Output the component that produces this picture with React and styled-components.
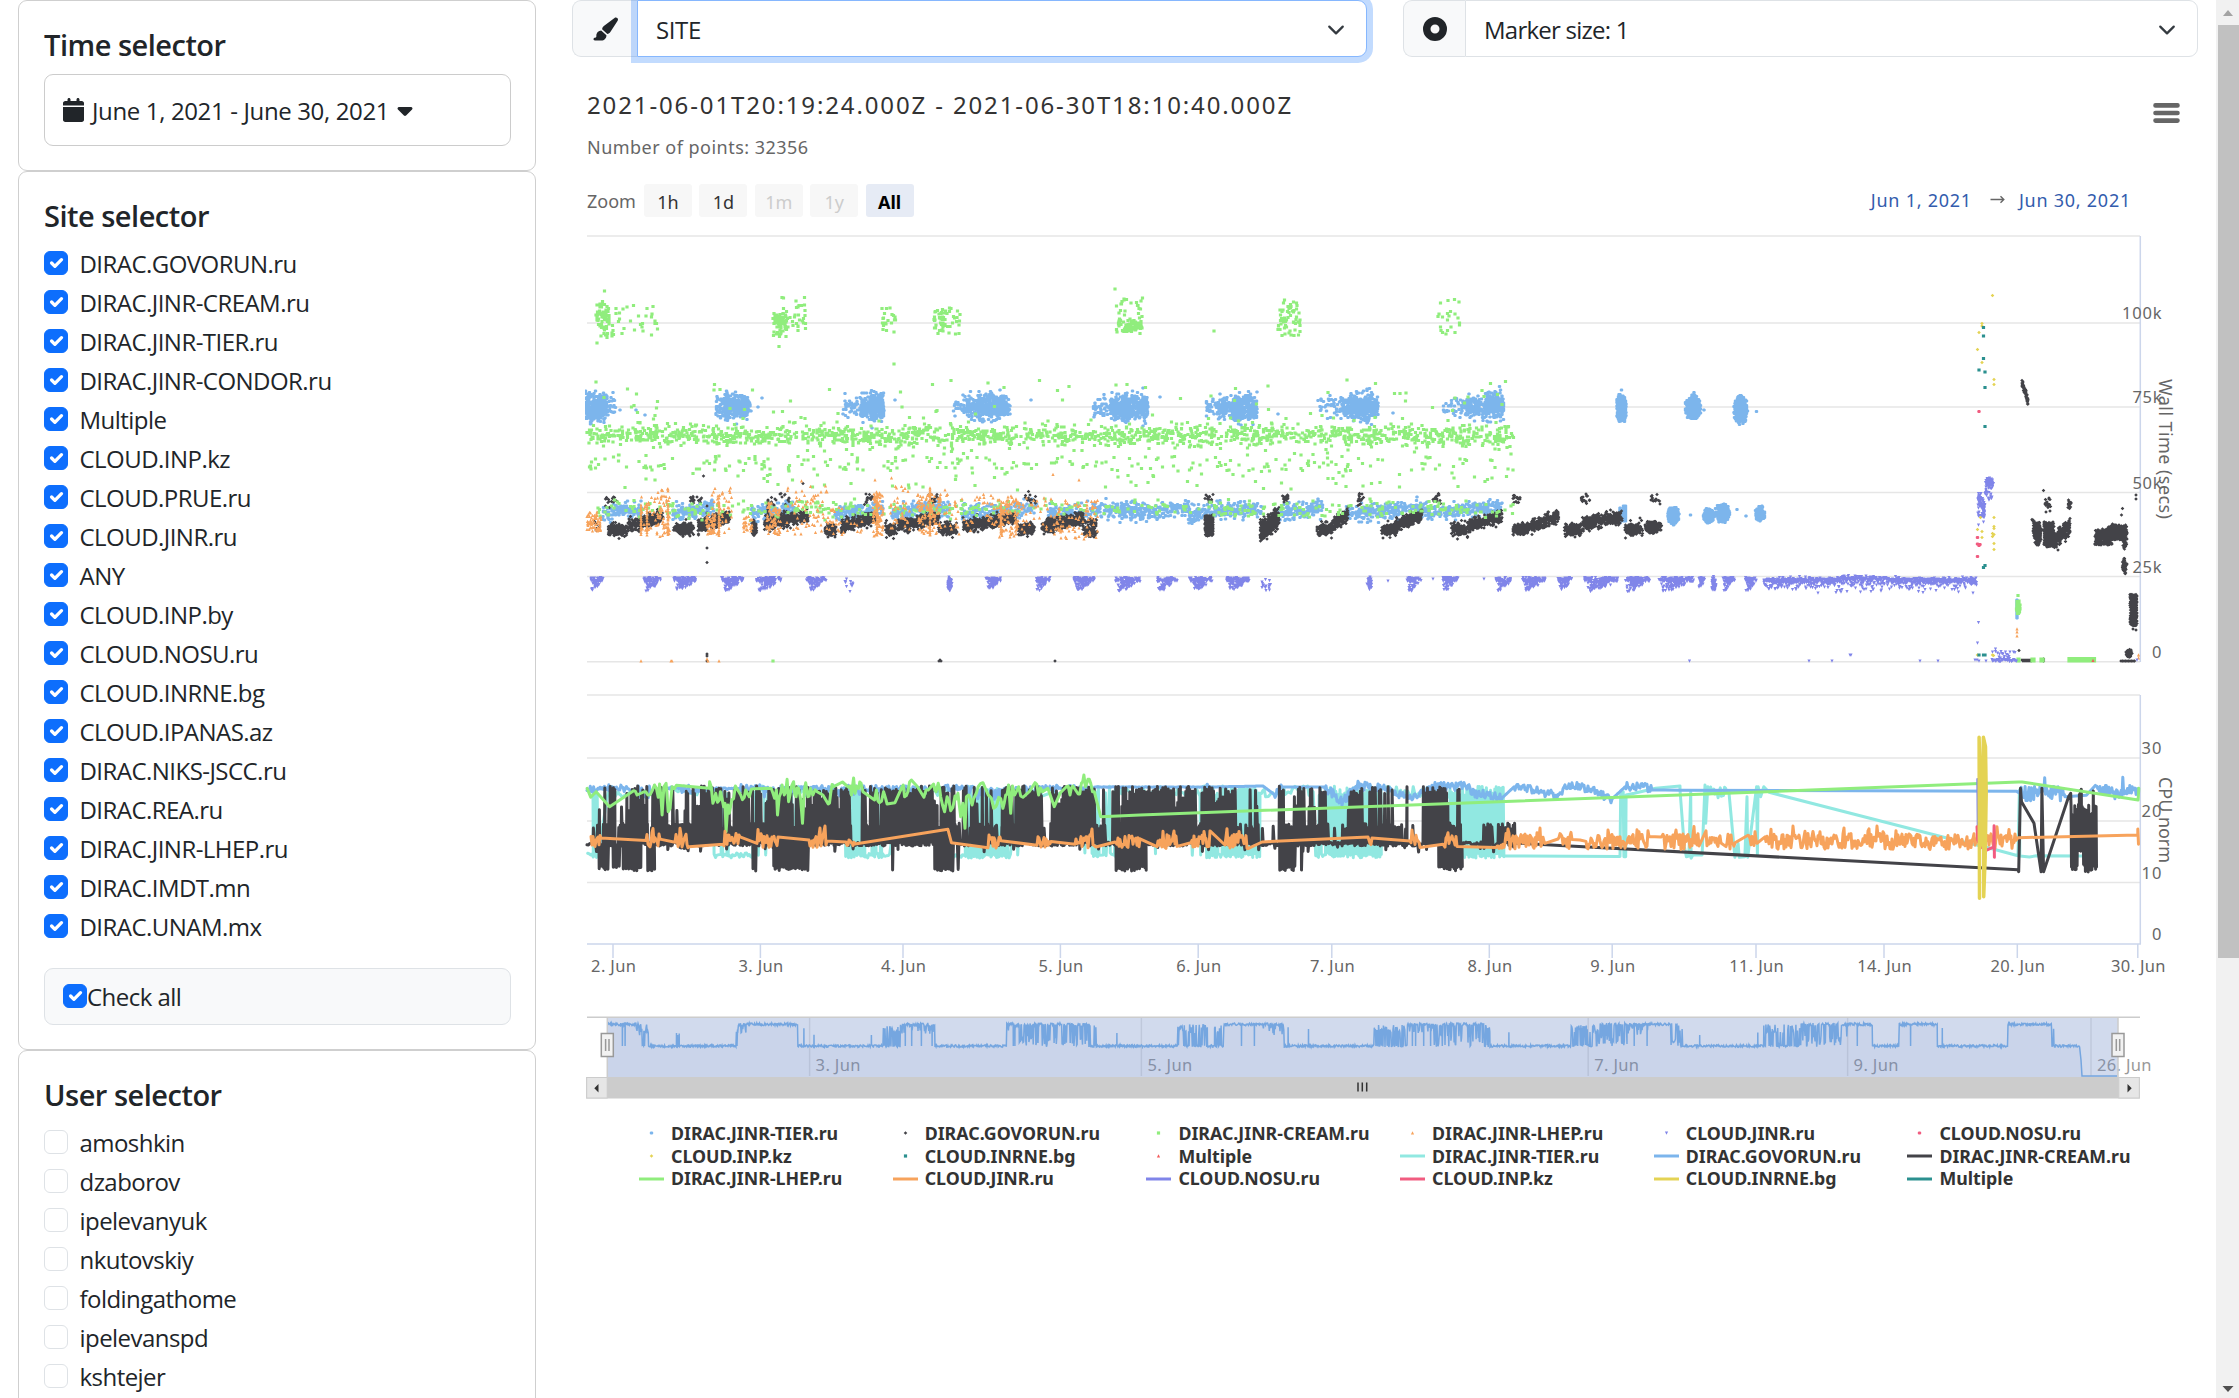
import React from "react";
import styled, { createGlobalStyle, css } from "styled-components";
import { FaCalendar, FaCaretDown, FaPaintbrush, FaCircleDot } from "react-icons/fa6";

const ui = '"Open Sans", "Noto Sans", sans-serif';
const chartFont = '"Noto Sans", "Open Sans", sans-serif';

const GlobalStyle = createGlobalStyle`
  * { box-sizing: border-box; }
  body { margin: 0; background: #fff; color: #212529; font-family: ${ui}; font-size: 24px; line-height: 36px; overflow: hidden; }
`;

const Page = styled.div`
  display: flex;
  height: 1398px;
  overflow: hidden;
`;

const Sidebar = styled.aside`
  flex: none;
  width: 536px;
  padding-left: 18px;
`;

const Card = styled.section`
  border: 1px solid #cfcfcf;
  border-radius: 9px;
  padding: 24px 24px 24px 25px;
`;

const CardTitle = styled.h5`
  height: 36px;
  margin: 0 0 13px;
  padding-top: 2px;
  font-size: 29px;
  font-weight: 600;
  line-height: 36px;
  letter-spacing: -0.5px;
`;

const DateButton = styled.div`
  display: flex;
  align-items: center;
  height: 72px;
  padding-left: 18px;
  border: 1px solid #cccccc;
  border-radius: 9px;
  letter-spacing: -0.36px;
  span { padding: 2px 4px 0 5px; white-space: pre; }
`;

const CheckRow = styled.label`
  display: flex;
  height: 39px;
  letter-spacing: -0.54px;
  span { padding: 1px 0 0 ${(p) => (p.$tight ? 0 : "11.5px")}; }
`;

const Box = styled.i`
  flex: none;
  display: flex;
  width: 24px;
  height: 24px;
  margin-top: 6px;
  border-radius: 6px;
  border: 1px solid ${(p) => (p.$on ? "#0d6efd" : "#dee2e6")};
  background: ${(p) => (p.$on ? "#0d6efd" : "#fff")};
`;

const CheckAll = styled.div`
  height: 57px;
  margin-top: 21px;
  padding: 9px 18px;
  border: 1px solid #dee2e6;
  border-radius: 9px;
  background: #f8f9fa;
`;

const Main = styled.main`
  flex: 1;
  padding: 0 18px 0 36px;
`;

const Toolbar = styled.div`
  display: flex;
  gap: 36px;
`;

const Group = styled.div`
  display: flex;
  width: 795px;
  height: 57px;
`;

const Addon = styled.div`
  display: flex;
  align-items: center;
  justify-content: center;
  width: ${(p) => p.$w}px;
  border: 1px solid #dee2e6;
  border-right: 0;
  border-radius: 9px 0 0 9px;
  background: #f8f9fa;
`;

const Select = styled.div`
  display: flex;
  flex: 1;
  align-items: center;
  justify-content: space-between;
  padding: 2px 18px 0;
  background: #fff;
  border: 1px solid #dee2e6;
  border-radius: 0 9px 9px 0;
  letter-spacing: -0.75px;
  ${(p) => p.$focus && css`
    border-color: #86b7fe;
    box-shadow: 0 0 0 6px rgba(13, 110, 253, 0.25);
    letter-spacing: -0.4px;
  `}
`;

const ChartHead = styled.header`
  display: flex;
  justify-content: space-between;
  padding: 32px 18px 0 15px;
  height: 127px;
  font-family: ${chartFont};
`;

const ChartTitle = styled.div`
  font-size: 24px;
  line-height: 32px;
  color: #333;
  letter-spacing: 1.87px;
`;

const ChartSubtitle = styled.div`
  margin-top: 14px;
  font-size: 18px;
  line-height: 24px;
  color: #666;
  letter-spacing: 0.48px;
`;

const Burger = styled.svg`
  margin-top: 13px;
`;

const RangeBar = styled.div`
  display: flex;
  align-items: center;
  height: 33px;
  padding: 0 67px 0 15px;
  font-family: ${chartFont};
  font-size: 18px;
  color: #666;
`;

const ZoomLabel = styled.span`
  width: 57px;
`;

const RangeButton = styled.button`
  width: 48px;
  height: 33px;
  margin: 0 7.4px 0 0;
  padding: 0;
  border: 0;
  border-radius: 3px;
  font: inherit;
  background: ${(p) => (p.$active ? "#e6ebf5" : "#f7f7f7")};
  color: ${(p) => (p.$active ? "#000" : p.$disabled ? "#ccc" : "#333")};
  font-weight: ${(p) => (p.$active ? 700 : 400)};
`;

const Dates = styled.div`
  display: flex;
  align-items: center;
  height: 31px;
  margin: 0 0 2px auto;
  color: #335cad;
  letter-spacing: 0.75px;
`;

const Arrow = styled.svg`
  margin: 0 14px 0 18px;
`;

const Plot = styled.svg`
  display: block;
  margin-top: 13px;
  font-family: ${chartFont};
  font-size: 16.5px;
`;

const Legend = styled.ul`
  display: grid;
  grid-template-columns: repeat(6, 253.7px);
  grid-auto-rows: 22.7px;
  margin: 14px 0 0 67px;
  padding: 0;
  list-style: none;
  font: 700 17.8px/22.7px ${chartFont};
  color: #333;
  li { display: flex; align-items: center; gap: 7px; white-space: nowrap; }
`;

const ScrollTrack = styled.div`
  display: flex;
  flex-direction: column;
  justify-content: space-between;
  align-items: center;
  width: 23px;
  padding: 8px 0 5px;
  background: #f1f1f1;
`;

const Thumb = styled.div`
  width: 21px;
  height: 933px;
  margin: 8px 0 auto 2px;
  background: #c1c1c1;
`;

const sites = ["DIRAC.GOVORUN.ru", "DIRAC.JINR-CREAM.ru", "DIRAC.JINR-TIER.ru", "DIRAC.JINR-CONDOR.ru", "Multiple", "CLOUD.INP.kz", "CLOUD.PRUE.ru", "CLOUD.JINR.ru", "ANY", "CLOUD.INP.by", "CLOUD.NOSU.ru", "CLOUD.INRNE.bg", "CLOUD.IPANAS.az", "DIRAC.NIKS-JSCC.ru", "DIRAC.REA.ru", "DIRAC.JINR-LHEP.ru", "DIRAC.IMDT.mn", "DIRAC.UNAM.mx"];
const users = ["amoshkin", "dzaborov", "ipelevanyuk", "nkutovskiy", "foldingathome", "ipelevanspd", "kshtejer"];

const C = { blue: "#7cb5ec", black: "#434348", green: "#90ed7d", orange: "#f7a35c", purple: "#8085e9", pink: "#f15c80", yellow: "#e4d354", teal: "#2b908f", red: "#f45b5b", cyan: "#91e8e1" };

const legend = [
  ["DIRAC.JINR-TIER.ru", C.blue, "circle"], ["DIRAC.GOVORUN.ru", C.black, "diamond"], ["DIRAC.JINR-CREAM.ru", C.green, "square"], ["DIRAC.JINR-LHEP.ru", C.orange, "up"], ["CLOUD.JINR.ru", C.purple, "down"], ["CLOUD.NOSU.ru", C.pink, "circle"],
  ["CLOUD.INP.kz", C.yellow, "diamond"], ["CLOUD.INRNE.bg", C.teal, "square"], ["Multiple", C.red, "up"], ["DIRAC.JINR-TIER.ru", C.cyan], ["DIRAC.GOVORUN.ru", C.blue], ["DIRAC.JINR-CREAM.ru", C.black],
  ["DIRAC.JINR-LHEP.ru", C.green], ["CLOUD.JINR.ru", C.orange], ["CLOUD.NOSU.ru", C.purple], ["CLOUD.INP.kz", C.pink], ["CLOUD.INRNE.bg", C.yellow], ["Multiple", C.teal],
];

/* ---------- seeded data ---------- */
let seed = 20210601;
const rnd = () => {
  seed = (seed * 1664525 + 1013904223) >>> 0;
  return seed / 4294967296;
};
const gauss = () => (rnd() + rnd() + rnd() + rnd() - 2) / 2;
const q = (v) => Math.round(v * 2) / 2;

/* uniform in x, bell-shaped in y */
const fill = (out, x0, x1, y0, y1, n) => {
  for (let i = 0; i < n; i++) out.push([x0 + rnd() * (x1 - x0), (y0 + y1) / 2 + gauss() * (y1 - y0) * 0.72]);
};
/* uniform in both directions */
const spread = (out, x0, x1, y0, y1, n) => {
  for (let i = 0; i < n; i++) out.push([x0 + rnd() * (x1 - x0), y0 + rnd() * (y1 - y0)]);
};
/* soft-edged ellipse */
const blob = (out, x0, x1, y0, y1, n) => {
  for (let i = 0; i < n; i++) {
    const a = rnd() * 6.283, r = Math.pow(rnd(), 0.55) * (0.8 + rnd() * 0.28);
    out.push([(x0 + x1) / 2 + (Math.cos(a) * r * (x1 - x0)) / 2, (y0 + y1) / 2 + (Math.sin(a) * r * (y1 - y0)) / 2]);
  }
};
const slope = (out, x0, x1, ya, yb, h, n) => {
  for (let i = 0; i < n; i++) {
    const t = rnd();
    out.push([x0 + t * (x1 - x0), ya + t * (yb - ya) + gauss() * h]);
  }
};

const green = [];
[[596, 609, 300, 338, 62], [773, 788, 308, 338, 62], [934, 945, 303, 336, 36], [1118, 1142, 318, 334, 56], [587, 1514, 424, 447, 1500], [587, 1514, 499, 519, 420]].forEach((a) => fill(green, ...a));
[[609, 658, 304, 337, 32], [780, 806, 297, 331, 36], [882, 897, 306, 332, 20], [943, 961, 308, 334, 20], [1115, 1143, 297, 332, 44], [1278, 1301, 299, 336, 56], [1438, 1460, 296, 336, 22], [587, 1514, 380, 402, 42], [587, 1514, 400, 430, 40], [587, 1514, 418, 452, 110], [587, 1514, 457, 471, 150], [587, 1514, 453, 490, 140]].forEach((a) => spread(green, ...a));
[[604.6, 291], [597, 343], [779, 346.5], [894, 364], [1214, 331], [1115, 289], [773, 661], [2018, 595.7]].forEach((p) => green.push(p));
blob(green, 2016.5, 2020, 600, 614, 70);
for (let x = 2069; x < 2096; x += 1.5) green.push([x, 658.5], [x, 661]);
[2018, 2019, 2032, 2034, 2041, 2043].forEach((x) => green.push([x, 659], [x, 661]));

const blue = [];
[[585, 607, 391, 423, 330], [716, 751, 394, 421, 120], [724, 748, 391, 422, 220], [843, 859, 395, 419, 44], [860, 872, 393, 422, 110], [870, 884, 391, 423, 220], [953, 970, 394, 420, 36], [966, 1010, 394, 421, 210], [978, 1008, 391, 422, 260], [1093, 1112, 395, 420, 46], [1110, 1130, 394, 421, 190], [1122, 1148, 391, 423, 290], [1206, 1225, 398, 417, 40], [1218, 1240, 395, 422, 120], [1234, 1257, 391, 424, 250], [1316, 1345, 396, 418, 44], [1340, 1379, 394, 421, 200], [1350, 1374, 391, 423, 250], [1443, 1475, 397, 419, 56], [1465, 1490, 394, 420, 120], [1486, 1504, 391, 421, 220]].forEach((a) => fill(blue, ...a));
fill(blue, 600, 616, 395, 419, 50);
[[1685, 1701, 395, 421, 280], [1734, 1748, 395, 425, 280], [1667.5, 1679, 506, 525, 210], [1703, 1714, 508, 524, 140], [1715, 1730, 503, 523, 210], [1755, 1765, 505, 522, 130]].forEach((a) => blob(blue, ...a));
spread(blue, 1617, 1626, 399, 418, 240);
spread(blue, 1618.5, 1624.5, 394, 422, 100);
[[603, 642, 110], [673, 714, 150], [750, 795, 130], [835, 884, 150], [892, 950, 190], [962, 1037, 190], [1048, 1140, 210], [1120, 1190, 190], [1188, 1263, 210], [1277, 1323, 150], [1345, 1427, 280], [1427, 1502, 220]].forEach(([a, b, n]) => slope(blue, a, b, 514, 508, 14, n));
for (let y = 506; y < 522; y++) blue.push([1623.5, y], [1625.5, y], [1620, y + 2]);
for (let y = 600; y < 619; y++) blue.push([2017, y]);
[[1621.7, 390], [620, 410], [636, 410], [645, 415], [762, 398], [758, 407], [895, 400], [1031, 400], [1160, 397], [1278, 414], [1393, 413], [1694, 392.5], [1704, 410], [1756.7, 411.5], [1690.5, 515], [1737, 509.5], [1746, 516]].forEach((p) => blue.push(p));

const black = [];
[[608, 628], [673.6, 694], [938, 957], [1017, 1035], [1317, 1332], [1381, 1397], [1451, 1468], [1513, 1530], [1564, 1582.5], [1625, 1642.5], [885, 897], [824, 836]].forEach(([a, b]) => {
  blob(black, a, b, 524, 535, (b - a) * 7);
  fill(black, a, b, 520, 539, (b - a) * 2.5);
});
[[629, 663, 526, 516], [698, 730, 526, 516], [764, 808, 524, 515], [841, 876, 526, 517], [898, 939, 526, 517], [963, 1016, 526, 517], [1042, 1083, 527, 518], [1330, 1348, 527, 514], [1395, 1422, 526, 515], [1468, 1502, 526, 516], [1531, 1558.6, 526, 516], [1582.5, 1622, 524, 517]].forEach(([a, b, c, d]) => slope(black, a, b, c, d, 10.5, (b - a) * 9));
[[751, 757, 520, 536, 60], [1644, 1662, 520, 534, 130], [2034, 2041, 524, 546, 150], [2122, 2127, 530, 550, 40], [2122, 2127, 557, 574, 60], [2126, 2132, 649, 658, 60]].forEach((a) => blob(black, ...a));
[[1082, 1097, 519, 537, 110], [1205, 1213, 515, 536, 270], [2044, 2054, 522, 547, 260], [2033, 2041, 522, 536, 60], [2095, 2112, 530, 545, 200], [2110, 2127, 525, 540, 260], [2130, 2137, 594, 626, 250], [587, 600, 521, 531, 8]].forEach((a) => spread(black, ...a));
slope(black, 1260, 1279, 531, 518, 17, 460);
slope(black, 2022, 2028, 383, 401, 7, 80);
slope(black, 2032, 2042, 520, 530, 2, 40);
slope(black, 2054, 2070, 541, 526, 14, 220);
slope(black, 2095, 2114, 537, 526, 6, 90);
[[605, 618], [690, 703], [771, 790], [864, 873], [928, 938], [1025, 1036], [1205, 1213], [1282, 1288], [1357, 1364], [1433, 1441], [1512, 1520], [1581, 1590], [1651, 1661], [2045, 2051], [2067, 2072]].forEach(([a, b]) => fill(black, a, b, a > 2000 ? 497 : 493, a > 2000 ? 514 : 506, 16));
for (let y = 500; y < 528; y++) black.push([768, y]);
for (let x = 2022; x < 2033; x += 1) black.push([x, 660 + (x % 2)]);
for (let x = 2121; x < 2136; x += 1.5) black.push([x, 661]);
[[703.5, 476], [803, 483.5], [706.8, 548], [706.8, 562.7], [706.8, 654], [706.8, 656], [706.8, 661], [940, 660], [941, 661], [939, 661], [1055, 661], [2043.6, 490.5], [2136, 495], [2136, 499], [2122.5, 508.5], [2121.5, 515], [2023, 661], [2019, 650.6], [2043.7, 659], [2043.7, 661], [2133, 629], [2136, 630], [706.8, 513], [706.8, 506]].forEach((p) => black.push(p));

const orange = [];
[[587, 601, 512, 531, 60], [640, 656, 494, 530, 24], [657, 670, 488, 537, 60], [706, 716, 512, 534, 50], [712, 732, 486, 538, 44], [743, 752, 516, 532, 26], [766, 781, 502, 535, 74], [786, 830, 486, 534, 66], [824, 862, 507, 536, 30], [873, 883, 492, 538, 80], [890, 910, 486, 530, 36], [917, 941, 494, 534, 110], [944, 976, 488, 535, 30], [998, 1018, 496, 537, 100], [976, 1000, 492, 530, 26], [1018, 1054, 494, 534, 36], [1054, 1098, 500, 540, 84]].forEach((a) => spread(orange, ...a));
[718.9, 647, 641, 668, 877, 930, 1001].forEach((x) => { for (let y = 488 + (x % 3) * 8; y < 536; y += 2) orange.push([x, y + rnd()]); });
[[641, 661], [671, 661], [672, 661], [707, 659], [708, 661], [719, 661], [1053, 474.5], [1079, 480], [891.5, 478], [875, 480], [801.5, 481], [2017, 629], [2017, 632], [2017, 636], [2138.6, 655], [2138.6, 658]].forEach((p) => orange.push(p));

const purple = [];
[[590, 603], [644, 661], [674, 696], [721, 743], [756, 781], [806, 826], [986, 1001], [1036, 1050], [1073, 1095], [1115, 1141], [1157, 1177], [1189, 1212], [1226, 1249], [1407, 1421], [1441, 1458], [1496, 1512], [1522, 1545], [1558, 1572], [1584, 1618], [1625, 1650], [1659, 1694], [1698, 1705], [1723, 1735], [1745, 1757]].forEach(([a, b]) => {
  const w = b - a;
  for (let i = 0; i < w * 2.6; i++) purple.push([a + rnd() * w, 577.5 + rnd() * 4]);
  for (let i = 0; i < w * 2.6; i++) {
    const t = rnd();
    purple.push([a + w * (0.05 + 0.75 * (t * 0.7 + rnd() * 0.3)), 580 + (1 - t * 0.6) * rnd() * 12]);
  }
});
blob(purple, 947.5, 952, 577, 592, 60);
blob(purple, 1367, 1372, 577, 590, 50);
blob(purple, 1711, 1716.5, 576, 591, 50);
fill(purple, 845, 853, 577, 592, 12);
fill(purple, 1261, 1271, 580, 592, 16);
for (let x = 1764; x < 1977; x += 0.5) {
  const c = x > 1842 && x < 1877 ? 578.5 : 580.3;
  purple.push([x, c + gauss() * 5]);
  if (rnd() < 0.5) purple.push([x, c + gauss() * 2.5]);
  if (rnd() < 0.6) purple.push([x, 582 + rnd() * rnd() * 12]);
}
blob(purple, 1985, 1994, 478, 489, 90);
slope(purple, 1978, 1985, 498, 509, 12, 70);
fill(purple, 1978, 1985, 506, 522, 26);
fill(purple, 1985, 1993, 488, 502, 18);
for (let x = 1992; x < 2017; x += 0.7) {
  purple.push([x, 659 + rnd() * 2.5]);
  if (rnd() < 0.6) purple.push([x, 651 + rnd() * 9]);
}
[[1978.7, 525], [1978.7, 622.7], [1977.5, 643], [1975, 660], [1977, 660], [1979, 661], [1986, 661], [1850, 655], [1851, 655], [1689.6, 661], [1809, 661], [1832, 661], [1920, 661], [1938, 661], [2137, 660], [1387.8, 581], [1433, 579], [1484, 579], [1995.5, 649]].forEach((p) => purple.push(p));

const at = (arr) => arr.map(([x, y]) => [1680 + x / 2.805, 270 + y / 3]);
const yellow = at([[876, 76], [847, 160], [847, 168], [839, 188], [834, 238], [847, 277], [881, 328], [881, 343], [843, 743], [881, 742], [834, 778], [847, 785], [847, 802], [881, 770], [881, 775], [876, 790], [881, 793], [876, 800], [881, 821], [881, 838], [834, 1155], [876, 1155], [880, 1156]]);
const teal = at([[851, 173], [851, 198], [851, 265], [838, 300], [855, 306], [855, 353], [855, 470], [855, 887], [851, 892], [839, 1155], [851, 1155], [856, 1155]]);
const pink = at([[838, 425], [834, 803], [834, 822], [839, 826], [842, 824], [834, 859]]);
const red = at([[1158, 1172]]);

const shapes = {
  circle: (x, y) => `M${x - 0.9} ${y - 1.6}h1.8l.8.8v1.6l-.8.8h-1.8l-.8-.8v-1.6z`,
  square: (x, y) => `M${x - 1.6} ${y - 1.6}h3.2v3.2h-3.2z`,
  diamond: (x, y) => `M${x} ${y - 1.8}l1.8 1.8-1.8 1.8-1.8-1.8z`,
  up: (x, y) => `M${x} ${y - 1.8}l1.6 3.3h-3.2z`,
  down: (x, y) => `M${x - 1.6} ${y - 1.5}h3.2l-1.6 3.3z`,
};
const marks = (pts, kind) => pts.map(([x, y]) => shapes[kind](q(x), q(y))).join("");

const scatter = [
  [marks(blue, "circle"), C.blue], [marks(black, "diamond"), C.black], [marks(green, "square"), C.green], [marks(orange, "up"), C.orange], [marks(purple, "down"), C.purple],
  [marks(pink, "circle"), C.pink], [marks(yellow, "diamond"), C.yellow], [marks(teal, "square"), C.teal], [marks(red, "up"), C.red],
];

/* ---------- CPU norm lines ---------- */
const toPath = (pts) => "M" + pts.map(([x, y]) => x.toFixed(1) + " " + y.toFixed(1)).join("L");
const A = (x, y) => [580 + x / 2.8, 680 + y / 3];
const B = (x, y) => [1120 + x / 2.8, 680 + y / 3];
const D = (x, y) => [1680 + x / 2.805, 680 + y / 3];

/* [from, to, share of high peaks, of middle peaks, of dips] */
const blackLine = [];
[
  [587, 593, 0, 0, 0], [593, 599, 0.1, 0.5, 0.3], [599, 613, 0.3, 0.4, 0.85], [613, 641, 0.72, 0.2, 0.85], [641, 647, 0.95, 0, 0], [647, 654, 0.1, 0.2, 0.6], [654, 667, 0.8, 0.2, 0.25], [667, 697, 0.3, 0.7, 0], [697, 719, 0.92, 0.08, 0],
  [719, 740, 0.5, 0.4, 0], [740, 773, 0.7, 0.3, 0.03], [773, 807, 0.7, 0.2, 0.95], [807, 851, 0.75, 0.25, 0.02], [851, 862, 0.05, 0.1, 0], [862, 885, 0.6, 0.3, 0], [885, 898, 0.8, 0.1, 0.35], [898, 934, 0.88, 0.1, 0], [934, 952, 0.75, 0.2, 0.95],
  [952, 963, 0.3, 0.4, 0.4], [963, 988, 0.5, 0.4, 0], [988, 1002, 0.12, 0.4, 0], [1002, 1041, 0.8, 0.2, 0], [1041, 1052, 0.25, 0.3, 0], [1052, 1095, 0.85, 0.15, 0], [1095, 1114, 0.12, 0.5, 0], [1114, 1120, 0.6, 0.2, 0.95], [1120, 1136, 0.35, 0.5, 0.98],
  [1136, 1146, 0.85, 0.1, 0.98], [1146, 1153, 1, 0, 0], [1153, 1180, 0.95, 0.05, 0], [1180, 1205, 0.4, 0.6, 0], [1205, 1236, 0.95, 0.05, 0.02], [1236, 1247, 0.1, 0.6, 0], [1247, 1262, 0.4, 0.3, 0], [1262, 1279, 0, 0.25, 0], [1279, 1294, 0.35, 0.6, 0.9],
  [1294, 1306, 0.9, 0.1, 0.3], [1306, 1326, 0.5, 0.4, 0], [1326, 1348, 0.03, 0.3, 0], [1348, 1360, 1, 0, 0], [1360, 1385, 0.6, 0.3, 0], [1385, 1407, 0.25, 0.5, 0], [1407, 1423, 0, 0.2, 0], [1423, 1438, 1, 0, 0], [1438, 1448, 1, 0, 0.95], [1448, 1462, 0.15, 0.4, 0.8],
  [1462, 1482, 0, 0.05, 0], [1482, 1494, 0, 0.8, 0], [1494, 1498, 0, 0, 0], [1498, 1515, 0, 0.8, 0],
].forEach(([a, b, hi, mid, lo]) => {
  for (let x = a; x < b; x += 1.35) {
    blackLine.push([x, 842 + rnd() * 4]);
    const r = rnd();
    if (r < hi) blackLine.push([x + 0.4, 786 + (rnd() < 0.6 ? rnd() * 8 : rnd() * 26)]);
    else if (r < hi + mid) blackLine.push([x + 0.4, 823 + rnd() * 6]);
    if (rnd() < lo) blackLine.push([x + 0.8, 866 + rnd() * 5]);
    else if (rnd() < 0.06) blackLine.push([x + 0.8, 847 + rnd() * 5]);
  }
});
blackLine.push([1515, 843], [1560, 845.5], D(948, 569), D(950, 575), D(955, 325), D(958, 365), D(993, 430), D(1013, 575), D(1015, 325), D(1020, 575), D(1090, 350), D(1096, 340));
for (let x = 1097; x < 1168; x += 2.6) blackLine.push(D(x, (x > 1118 && x < 1126) || (x > 1157 && x < 1161) ? 325 + rnd() * 20 : 372 + rnd() * 40), D(x + 1.2, x > 1114 && x < 1130 ? 495 + rnd() * 20 : 550 + rnd() * 28));

const cyanLine = [];
[
  [587, 593, 0, 1], [593, 598, 1, 1], [598, 608, 0, 0], [608, 622, 1, 0], [622, 690, 0.15, 0], [690, 712, 0.5, 0], [712, 722, 0.4, 0.6], [722, 752, 0.03, 1], [752, 758, 0.8, 0.8], [758, 845, 0.4, 0.03], [845, 860, 1, 0.5], [860, 882, 0.3, 1], [882, 890, 0.1, 1], [890, 952, 0.4, 0.03],
  [952, 965, 0, 1], [965, 1010, 0.8, 1], [1010, 1090, 0.3, 0.03], [1090, 1116, 0.6, 0.7], [1116, 1145, 0.5, 0.1], [1145, 1165, 0.5, 0.15], [1165, 1206, 0.5, 0.02], [1206, 1238, 0.7, 1], [1238, 1260, 1, 1], [1260, 1315, 0.6, 0.02], [1315, 1326, 0.2, 0.8], [1326, 1381, 1, 1], [1381, 1450, 0.9, 0.02], [1450, 1504, 1, 1],
].forEach(([a, b, hi, lo]) => {
  for (let x = a; x < b; x += 1.4) {
    if (rnd() < hi) cyanLine.push([x, 786 + rnd() * 11]);
    if (rnd() < lo) cyanLine.push([x + 0.7, 853 + rnd() * 5]);
  }
});
cyanLine.push([1504, 856], [1620, 856.5], B(1402, 335), B(1409, 335), B(1411, 530), B(1416, 530), B(1417, 345), B(1440, 340), B(1500, 325), B(1568, 318), D(0, 330), D(12, 500), D(18, 530), D(25, 528), D(30, 335), D(31, 535), D(36, 525), D(62, 525), D(70, 315), D(72, 430), D(78, 320));
for (let x = 80; x < 140; x += 3) cyanLine.push(D(x, 318 + rnd() * 36));
cyanLine.push(D(154, 532), D(163, 490), D(166, 532), D(182, 530), D(188, 350), D(190, 532), D(215, 320), D(217, 525), D(219, 320), D(226, 350), D(235, 320), D(250, 337), D(740, 472), D(870, 505), D(948, 527), D(952, 330), D(953, 528), D(980, 531), D(1000, 527), D(1130, 528));

const blueLine = [];
[[587, 600, 790, 4], [600, 634, 788, 4], [634, 660, 792, 6], [660, 682, 788, 1], [682, 700, 789, 5], [700, 740, 789, 1.5], [740, 760, 788, 4], [760, 800, 792, 6], [800, 822, 789, 3], [822, 880, 791, 6], [880, 940, 789, 3], [940, 968, 788, 3], [968, 1004, 793, 7], [1004, 1050, 790, 5], [1050, 1095, 788, 3], [1095, 1205, 787, 0.3], [1205, 1210, 787, 3]].forEach(([a, b, m, h]) => {
  for (let x = a; x < b; x += 1.1) blueLine.push([x, m + (rnd() - 0.5) * h * 2]);
});
[[1210, 787], [1263, 786], [1275, 795], [1282, 787], [1325, 787], [1343, 802], [1356, 785], [1380, 788], [1403, 797], [1420, 795], [1432, 786], [1466, 786], [1475, 793], [1502, 798], [1515, 786], [1535, 790], [1560, 796], [1565, 785], [1585, 788], [1612, 799], [1626, 786], [1642, 787], [1652, 790], [1665, 790]].forEach(([x, y], i, all) => {
  const n = all[i + 1];
  if (!n) {
    blueLine.push([x, y]);
    return;
  }
  const noisy = x > 1263 && ![1282, 1502, 1612, 1652].includes(x);
  for (let t = x; t < n[0]; t += 1) blueLine.push([t, y + ((n[1] - y) * (t - x)) / (n[0] - x) + (noisy ? (rnd() - 0.5) * 9 : 0)]);
});
blueLine.push(D(0, 331), D(945, 334));
for (let x = 946; x < 1080; x += 2.2) blueLine.push(D(x, Math.abs(x - 1023) < 1.2 ? 293 : 318 + rnd() * 26 + (rnd() < 0.25 ? 20 : 0)));
blueLine.push(D(1080, 350), D(1140, 346));
for (let x = 1165; x < 1286; x += 2.2) blueLine.push(D(x, Math.abs(x - 1243) < 1.2 ? 292 : 316 + rnd() * 28 + (x > 1215 && x < 1250 ? 12 : 0)));

const greenLine = [];
[[20, 325], [30, 352], [45, 335], [83, 380], [150, 332], [160, 345], [178, 336], [190, 345], [203, 330], [214, 325], [219, 352], [223, 312], [230, 405], [235, 320], [241, 310], [247, 395], [252, 385], [258, 320], [270, 316], [362, 325], [363, 305], [372, 370], [380, 340], [390, 360], [393, 335], [402, 380], [406, 370], [409, 455], [414, 375], [418, 400], [425, 360], [435, 318], [450, 345], [460, 352], [468, 338], [474, 350], [486, 326], [535, 325], [545, 355], [550, 330], [553, 405], [558, 350], [566, 315], [572, 345], [580, 298], [584, 365], [592, 320], [598, 305], [605, 350], [612, 325], [618, 360], [623, 430], [628, 330], [632, 308], [638, 350], [645, 325], [652, 345], [664, 335], [680, 345], [695, 372], [702, 340], [710, 320], [735, 306], [752, 322], [757, 318], [760, 345], [766, 294], [770, 340], [780, 325], [787, 310], [792, 335], [825, 360], [830, 330], [838, 368], [850, 335], [860, 372], [882, 368], [900, 325], [905, 315], [909, 350], [918, 335], [928, 300], [945, 320], [963, 352], [975, 330], [990, 312], [997, 335], [1003, 310], [1010, 350], [1015, 375], [1021, 395], [1028, 350], [1038, 392], [1050, 348], [1058, 340], [1066, 410], [1072, 370], [1078, 445], [1082, 350], [1088, 345], [1098, 375], [1105, 350], [1115, 320], [1128, 308], [1143, 345], [1152, 355], [1164, 380], [1172, 352], [1184, 385], [1192, 345], [1200, 315], [1206, 400], [1211, 318], [1217, 345], [1228, 320], [1240, 352], [1258, 335], [1274, 308], [1284, 345], [1295, 335], [1310, 325], [1328, 380], [1345, 338], [1362, 320], [1372, 345], [1380, 318], [1395, 342], [1404, 310], [1411, 285], [1415, 320], [1422, 298], [1430, 310], [1440, 335], [1458, 410], [1568, 405]].forEach(([x, y], i, all) => {
  const p = all[i - 1];
  if (p && x - p[0] > 6 && x - p[0] < 14) greenLine.push(A((x + p[0]) / 2, (y + p[1]) / 2 + (rnd() - 0.5) * 34));
  greenLine.push(A(x, y));
});
greenLine.push(B(1568, 345), D(950, 306), D(960, 306), D(1285, 360), D(1287, 325));

const orangeLine = [];
const burst = (a, b, amp) => {
  for (let x = a; x < b; x += 1) orangeLine.push([x, 841.5 + (rnd() - 0.5) * amp + (rnd() < 0.12 ? -amp * 0.5 : 0)]);
};
[[591, 602, 13], [646, 661, 13], [675, 690, 15], [723, 741, 13], [757, 779, 13], [809, 820, 13]].forEach(([a, b, m]) => burst(a, b, m));
orangeLine.push([820, 828], [821, 846], [825, 826], [826, 845], [827, 841], [846, 842]);
burst(847, 855, 11);
orangeLine.push([855, 844], A(1030, 448), A(1040, 488));
[[988, 1002, 13], [1037, 1052, 12], [1075, 1094, 15]].forEach(([a, b, m]) => burst(a, b, m));
orangeLine.push([1096, 847], [1115, 842]);
[[1117, 1141, 14], [1157, 1178, 14], [1191, 1211, 13]].forEach(([a, b, m]) => burst(a, b, m));
orangeLine.push([1225, 845]);
burst(1227, 1249, 15);
orangeLine.push([1262, 842], [1368, 837]);
[[1370, 1373, 8], [1410, 1421, 13], [1443, 1458, 12], [1496, 1512, 16], [1513, 1546, 15], [1558, 1573, 15]].forEach(([a, b, m]) => burst(a, b, m));
orangeLine.push([1580, 840]);
[[1586, 1650, 15], [1661, 1700, 16], [1706, 1722, 11], [1726, 1736, 15], [1748, 1758, 15], [1765, 2017, 16]].forEach(([a, b, m]) => burst(a, b, m));
orangeLine.push(D(948, 473), D(1284, 465), D(1284, 447), D(1286, 493));

const lines = [
  [toPath(cyanLine), C.cyan], [toPath(blueLine), C.blue], [toPath(blackLine), C.black], [toPath(greenLine), C.green], [toPath(orangeLine), C.orange],
  [toPath([D(834, 297), D(835, 440)]), C.purple, 2],
  [toPath([D(833, 440), D(835, 480), D(845, 500), D(857, 512), D(876, 503), D(880, 503), D(881, 437), D(882, 532)]), C.pink],
  [toPath([D(840, 655), D(839, 172), D(846, 480), D(851, 172), D(852, 650), D(856, 530), D(851, 172), D(857, 200), D(859, 340), D(856, 525), D(848, 490)]), C.yellow, 3.5],
];

/* ---------- navigator ----------
   H high plateau, L low plateau, F high with short dips, D mostly toggling, N toggling from low */
const nav = [];
const navRun = (map, segs) => segs.forEach(([a, b, kind, spikes = []]) => {
  for (let x = a; x < b; x += 1.5) {
    const hi = 1033 + (rnd() - 0.5) * 8;
    const lo = 1098 + (rnd() - 0.5) * 7;
    let y = hi;
    if (kind === "L") y = lo;
    if (kind === "F" && rnd() < 0.3) y = hi + rnd() * 30;
    if (kind === "N") y = rnd() < 0.5 ? 1033 + rnd() * 26 : lo;
    if (kind === "D") y = rnd() < 0.42 ? 1066 + rnd() * 34 : hi;
    nav.push(map(x, y));
    if (spikes.some((s) => Math.abs(s - x) < 0.8)) nav.push(map(x + 0.3, kind === "L" ? 1042 + rnd() * 24 : 1098), map(x + 0.6, y));
  }
});
navRun(A, [[78, 155, "H", [118, 126]], [155, 170, "F"], [170, 192, "N"], [192, 435, "L", [270, 273, 277]], [435, 442, "N"], [442, 465, "F"], [465, 610, "H"], [610, 845, "L", [627, 655, 815]], [845, 900, "N"], [900, 994, "F", [910, 928, 955, 985]], [994, 1195, "L"], [1195, 1230, "F", [1213, 1218]], [1230, 1425, "D"], [1425, 1446, "N"], [1446, 1568, "L", [1503]]]);
navRun(B, [[0, 162, "L"], [162, 245, "N"], [245, 265, "L"], [265, 292, "N"], [292, 400, "H", [340, 376]], [400, 460, "F"], [460, 712, "L", [470, 528]], [712, 805, "N"], [805, 880, "F", [818, 828, 850, 870]], [880, 1025, "D"], [1025, 1036, "N"], [1036, 1262, "L", [1088]], [1262, 1340, "N"], [1340, 1420, "D"], [1420, 1480, "F", [1440, 1476]], [1480, 1540, "H"], [1540, 1568, "D"]]);
navRun(D, [[0, 10, "N"], [10, 215, "L", [55]], [215, 235, "L", [218]], [235, 340, "N"], [340, 420, "D"], [420, 470, "D"], [470, 540, "H", [497]], [540, 615, "L"], [615, 722, "H", [646]], [722, 920, "L", [735]], [920, 1042, "H"], [1042, 1049, "N"], [1049, 1122, "L"]]);
nav.push([2081, 1060], [2082, 1076], [2117, 1076]);

const xTicks = [[613, "2. Jun"], [760.4, "3. Jun"], [903, "4. Jun"], [1060.4, "5. Jun"], [1198.2, "6. Jun"], [1331.8, "7. Jun"], [1489.3, "8. Jun"], [1612.2, "9. Jun"], [1756, "11. Jun"], [1884, "14. Jun"], [2017.3, "20. Jun"], [2137.8, "30. Jun"]];
const yLabels = [["100k", 319, 39.5], ["75k", 403, 29], ["50k", 489, 29], ["25k", 573, 29], ["0", 658, 10], ["30", 753.5, 20], ["20", 817, 20], ["10", 879, 20], ["0", 940, 10]];
const navTicks = [[809.6, "3. Jun"], [1141.4, "5. Jun"], [1588.2, "7. Jun"], [1847.6, "9. Jun"], [2091, "26. Jun"]];
const labelWidth = (t) => (t.length > 6 ? 54.5 : 44.8);

function Handle({ x }) {
  return (
    <g>
      <rect x={x - 6} y={1033.5} width={12} height={23} fill="#f2f2f2" stroke="#999" strokeWidth={1.5} />
      <path d={`M${x - 1.7} 1039v12M${x + 1.7} 1039v12`} stroke="#999" strokeWidth={1.5} />
    </g>
  );
}

function Chart() {
  return (
    <Plot width="1626" height="878" viewBox="572 230 1626 878">
      {[236, 323, 407, 492.5, 576.5, 661.8, 695, 758, 821, 882.5].map((y) => (
        <path key={y} d={`M587 ${y}H2140`} stroke="#e6e6e6" strokeWidth="1.5" />
      ))}
      <path d="M2140.3 236V662M2140.3 695V944M587 944H2141" stroke="#ccd6eb" strokeWidth="1.5" fill="none" />
      {xTicks.map(([x, t]) => (
        <g key={t}>
          <path d={`M${x} 944v14`} stroke="#ccd6eb" strokeWidth="1.5" />
          <text x={x + 0.5} y="972" textAnchor="middle" fill="#666" textLength={labelWidth(t)}>{t}</text>
        </g>
      ))}
      <clipPath id="plot"><rect x="585" y="230" width="1556" height="720" /></clipPath>
      <g clipPath="url(#plot)">
        {scatter.map(([d, c]) => <path key={c} d={d} fill={c} />)}
        {lines.map(([d, c, w = 3]) => <path key={c} d={d} fill="none" stroke={c} strokeWidth={w} strokeLinejoin="round" strokeLinecap="round" />)}
      </g>
      {yLabels.map(([t, y, w]) => <text key={y} x="2161.5" y={y} textAnchor="end" fill="#666" textLength={w}>{t}</text>)}
      <g fill="#666" fontSize="18">
        <text transform="translate(2159 379) rotate(90)" textLength="140">Wall Time (secs)</text>
        <text transform="translate(2159 777) rotate(90)" textLength="86">CPU norm</text>
      </g>

      {navTicks.map(([x, t]) => (
        <g key={x}>
          <path d={`M${x} 1018V1076`} stroke="#e6e6e6" strokeWidth="1.5" />
          <text x={x + 6} y="1071" fill="#999" textLength={labelWidth(t)}>{t}</text>
        </g>
      ))}
      <path d={toPath(nav) + "L2117 1077H608Z"} fill="#335cad" fillOpacity=".05" />
      <path d={toPath(nav)} fill="none" stroke="#7cb5ec" strokeWidth="1.5" />
      <rect x="607" y="1018" width="1511" height="59" fill="#6685c2" fillOpacity=".3" />
      <path d="M587 1017.3H2140M607.3 1017V1077M2118 1017V1077" stroke="#ccc" strokeWidth="1.5" />
      <Handle x={607.3} />
      <Handle x={2118} />
      <rect x="586" y="1077" width="1554" height="21.5" fill="#ccc" />
      <rect x="586.7" y="1077.5" width="20.5" height="20.5" fill="#e6e6e6" stroke="#ccc" />
      <rect x="2118.8" y="1077.5" width="20.5" height="20.5" fill="#e6e6e6" stroke="#ccc" />
      <path d="M598.5 1084v8.5l-4.2-4.2zM2127.5 1084v8.5l4.2-4.2z" fill="#333" />
      <path d="M1358 1082.5v9M1362.3 1082.5v9M1366.7 1082.5v9" stroke="#333" strokeWidth="1.5" />
    </Plot>
  );
}

function Check({ label, on, tight }) {
  return (
    <CheckRow $tight={tight}>
      <Box $on={on}>
        {on && (
          <svg width="22" height="22" viewBox="0 0 20 20" fill="none" stroke="#fff" strokeWidth="3" strokeLinecap="round" strokeLinejoin="round">
            <path d="m6 10 3 3 6-6" />
          </svg>
        )}
      </Box>
      <span>{label}</span>
    </CheckRow>
  );
}

const Chevron = () => (
  <svg width="24" height="18" viewBox="-2.67 0 21.33 16" fill="none" stroke="#343a40" strokeWidth="2" strokeLinecap="round" strokeLinejoin="round">
    <path d="m2 5 6 6 6-6" />
  </svg>
);

function LegendSymbol({ color, kind }) {
  return (
    <svg width="25" height="12">
      {kind ? <path d={shapes[kind](12.5, 6)} fill={color} /> : <path d="M0 6h25" stroke={color} strokeWidth="3" />}
    </svg>
  );
}

export default function App() {
  return (
    <>
      <GlobalStyle />
      <Page>
        <Sidebar>
          <Card>
            <CardTitle>Time selector</CardTitle>
            <DateButton>
              <FaCalendar size={24} viewBox="32 0 448 512" />
              <span>June 1, 2021 - June 30, 2021</span>
              <FaCaretDown size={24} />
            </DateButton>
          </Card>
          <Card>
            <CardTitle>Site selector</CardTitle>
            {sites.map((s) => <Check key={s} label={s} on />)}
            <CheckAll><Check label="Check all" on tight /></CheckAll>
          </Card>
          <Card>
            <CardTitle>User selector</CardTitle>
            {users.map((s) => <Check key={s} label={s} />)}
          </Card>
        </Sidebar>
        <Main>
          <Toolbar>
            <Group>
              <Addon $w={65}><FaPaintbrush size={26} /></Addon>
              <Select $focus>SITE<Chevron /></Select>
            </Group>
            <Group>
              <Addon $w={62}><FaCircleDot size={24} /></Addon>
              <Select>Marker size: 1<Chevron /></Select>
            </Group>
          </Toolbar>
          <ChartHead>
            <div>
              <ChartTitle>2021-06-01T20:19:24.000Z - 2021-06-30T18:10:40.000Z</ChartTitle>
              <ChartSubtitle>Number of points: 32356</ChartSubtitle>
            </div>
            <Burger width="27" height="22" viewBox="0 0 27 22">
              <path d="M2.5 3.4h22M2.5 11h22M2.5 18.6h22" stroke="#666" strokeWidth="4.6" strokeLinecap="round" />
            </Burger>
          </ChartHead>
          <RangeBar>
            <ZoomLabel>Zoom</ZoomLabel>
            <RangeButton>1h</RangeButton>
            <RangeButton>1d</RangeButton>
            <RangeButton $disabled>1m</RangeButton>
            <RangeButton $disabled>1y</RangeButton>
            <RangeButton $active>All</RangeButton>
            <Dates>
              Jun 1, 2021
              <Arrow width="15" height="9" viewBox="0 0 15 9" fill="none" stroke="#666" strokeWidth="1.4">
                <path d="M.5 4.5h13M10.5 1.2l3.3 3.3-3.3 3.3" />
              </Arrow>
              Jun 30, 2021
            </Dates>
          </RangeBar>
          <Chart />
          <Legend>
            {legend.map(([t, c, k], i) => <li key={i}><LegendSymbol color={c} kind={k} />{t}</li>)}
          </Legend>
        </Main>
        <ScrollTrack>
          <svg width="12" height="9"><path d="M6 2l5 6H1z" fill="#a3a3a3" /></svg>
          <Thumb />
          <svg width="12" height="9"><path d="M6 8l5.5-6H.5z" fill="#505050" /></svg>
        </ScrollTrack>
      </Page>
    </>
  );
}
